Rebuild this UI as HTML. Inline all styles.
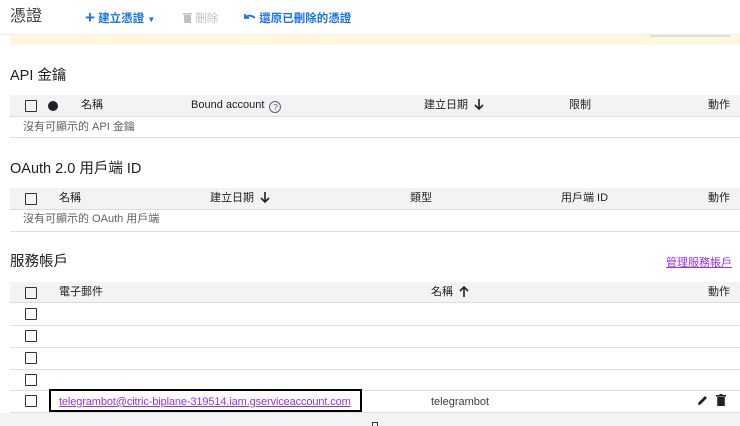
<!DOCTYPE html>
<html><head><meta charset="utf-8"><style>
*{margin:0;padding:0;box-sizing:border-box}
body{width:740px;height:426px;overflow:hidden;background:#fff;position:relative;font-family:"Liberation Sans","Noto Sans CJK TC",sans-serif;color:#202124}
.a{position:absolute;white-space:nowrap}
.t{font-size:11px;line-height:14px}
.h{font-size:14.5px;line-height:18px}
.hdr{position:absolute;left:10px;right:0;background:#f1f3f4;border-bottom:1px solid #dadce0}
.line{position:absolute;left:10px;right:0;height:1px;background:#e0e0e0}
.cb{position:absolute;width:12px;height:12px;border:1.7px solid #333;border-radius:1px}
.blue{color:#1a73e8;font-weight:bold;font-size:11.5px}
.arr{display:inline-block;vertical-align:-2px;margin-left:6px}
</style></head><body>
<div class="a" style="left:10px;top:7px;font-size:16px;line-height:20px;color:#3c4043">憑證</div>
<div class="a blue" style="left:85px;top:10px"><span style="font-size:17px;line-height:11px;vertical-align:-1px">+</span> 建立憑證 <span style="font-size:8px">▼</span></div>
<div class="a" style="left:183px;top:10px;font-size:11.5px;color:#bdc1c6"><svg width="9" height="10" viewBox="0 0 9 10" style="vertical-align:-1px"><rect x="0" y="0" width="9" height="1.5" fill="#bdc1c6"/><rect x="1" y="2" width="7" height="8" fill="#bdc1c6"/></svg> 刪除</div>
<div class="a blue" style="left:244px;top:10px"><svg width="12" height="9" viewBox="0 0 12 9" style="vertical-align:0"><path d="M1 1v4h4M1.5 4.5C3 2.5 7 1.5 11 5" stroke="#1a73e8" stroke-width="1.8" fill="none"/></svg> 還原已刪除的憑證</div>
<div class="a" style="left:0;right:0;top:34px;height:1px;background:#ececec"></div>
<div class="a" style="left:10px;right:0;top:35px;height:10px;background:#fef7e0"></div>
<div class="a" style="left:650px;top:35px;width:80px;height:2px;background:#e0e0e0"></div>

<div class="a h" style="left:10px;top:67px">API 金鑰</div>
<div class="hdr" style="top:95px;height:22px"></div>
<div class="cb" style="left:25px;top:100px"></div>
<div class="a" style="left:48px;top:101px;width:10px;height:10px;border-radius:50%;background:#202124"></div>
<div class="a t" style="left:81px;top:98px">名稱</div>
<div class="a t" style="left:191px;top:98px">Bound account <span style="display:inline-block;width:12px;height:12px;border:1px solid #5f6368;border-radius:50%;font-size:8.5px;line-height:10px;text-align:center;color:#5f6368;vertical-align:-2px;margin-left:2px">?</span></div>
<div class="a t" style="left:424px;top:98px">建立日期<svg class="arr" width="10" height="11" viewBox="0 0 10 11"><path d="M5 0v10M1 6l4 4 4-4" stroke="#202124" stroke-width="1.6" fill="none"/></svg></div>
<div class="a t" style="left:569px;top:98px">限制</div>
<div class="a t" style="left:708px;top:98px">動作</div>
<div class="a t" style="left:23px;top:120px;color:#5f6368">沒有可顯示的 API 金鑰</div>
<div class="line" style="top:137px"></div>

<div class="a h" style="left:10px;top:160px">OAuth 2.0 用戶端 ID</div>
<div class="hdr" style="top:188px;height:22px"></div>
<div class="cb" style="left:25px;top:193px"></div>
<div class="a t" style="left:59px;top:191px">名稱</div>
<div class="a t" style="left:210px;top:191px">建立日期<svg class="arr" width="10" height="11" viewBox="0 0 10 11"><path d="M5 0v10M1 6l4 4 4-4" stroke="#202124" stroke-width="1.6" fill="none"/></svg></div>
<div class="a t" style="left:410px;top:191px">類型</div>
<div class="a t" style="left:561px;top:191px">用戶端 ID</div>
<div class="a t" style="left:708px;top:191px">動作</div>
<div class="a t" style="left:23px;top:212px;color:#5f6368">沒有可顯示的 OAuth 用戶端</div>
<div class="line" style="top:231px"></div>

<div class="a h" style="left:10px;top:253px">服務帳戶</div>
<div class="a t" style="left:666px;top:256px;color:#9334e6;text-decoration:underline">管理服務帳戶</div>
<div class="hdr" style="top:282px;height:21px"></div>
<div class="cb" style="left:25px;top:287px"></div>
<div class="a t" style="left:59px;top:285px">電子郵件</div>
<div class="a t" style="left:431px;top:285px">名稱<svg class="arr" width="10" height="11" viewBox="0 0 10 11"><path d="M5 11V1M1 5l4-4 4 4" stroke="#202124" stroke-width="1.6" fill="none"/></svg></div>
<div class="a t" style="left:708px;top:285px">動作</div>
<div class="cb" style="left:25px;top:308px"></div>
<div class="line" style="top:325px"></div>
<div class="cb" style="left:25px;top:330px"></div>
<div class="line" style="top:347px"></div>
<div class="cb" style="left:25px;top:352px"></div>
<div class="line" style="top:369px"></div>
<div class="cb" style="left:25px;top:374px"></div>
<div class="line" style="top:390px"></div>
<div class="cb" style="left:25px;top:395px"></div>
<div class="a" style="left:49px;top:389px;width:313px;height:23px;border:2px solid #000"></div>
<div class="a t" style="left:59px;top:395px;color:#9334e6;text-decoration:underline;letter-spacing:-0.12px">telegrambot@citric-biplane-319514.iam.gserviceaccount.com</div>
<div class="a t" style="left:431px;top:395px;color:#3c4043">telegrambot</div>
<svg class="a" style="left:697px;top:395px" width="11" height="11" viewBox="0 0 11 11"><path d="M1 10l0.5-2.5L8 1l2 2-6.5 6.5z" fill="#202124"/></svg>
<svg class="a" style="left:716px;top:394px" width="10" height="12" viewBox="0 0 10 12"><rect x="0" y="1" width="10" height="1.6" fill="#202124"/><rect x="3.5" y="0" width="3" height="1.5" fill="#202124"/><rect x="1.2" y="3" width="7.6" height="9" fill="#202124"/></svg>
<div class="line" style="top:412px"></div>
<div class="a" style="left:0;right:0;top:413px;height:13px;background:#f1f3f4"></div>
<div class="a" style="left:372px;top:422px;width:6px;height:4px;border:1px solid #333;border-bottom:none"></div>
</body></html>
